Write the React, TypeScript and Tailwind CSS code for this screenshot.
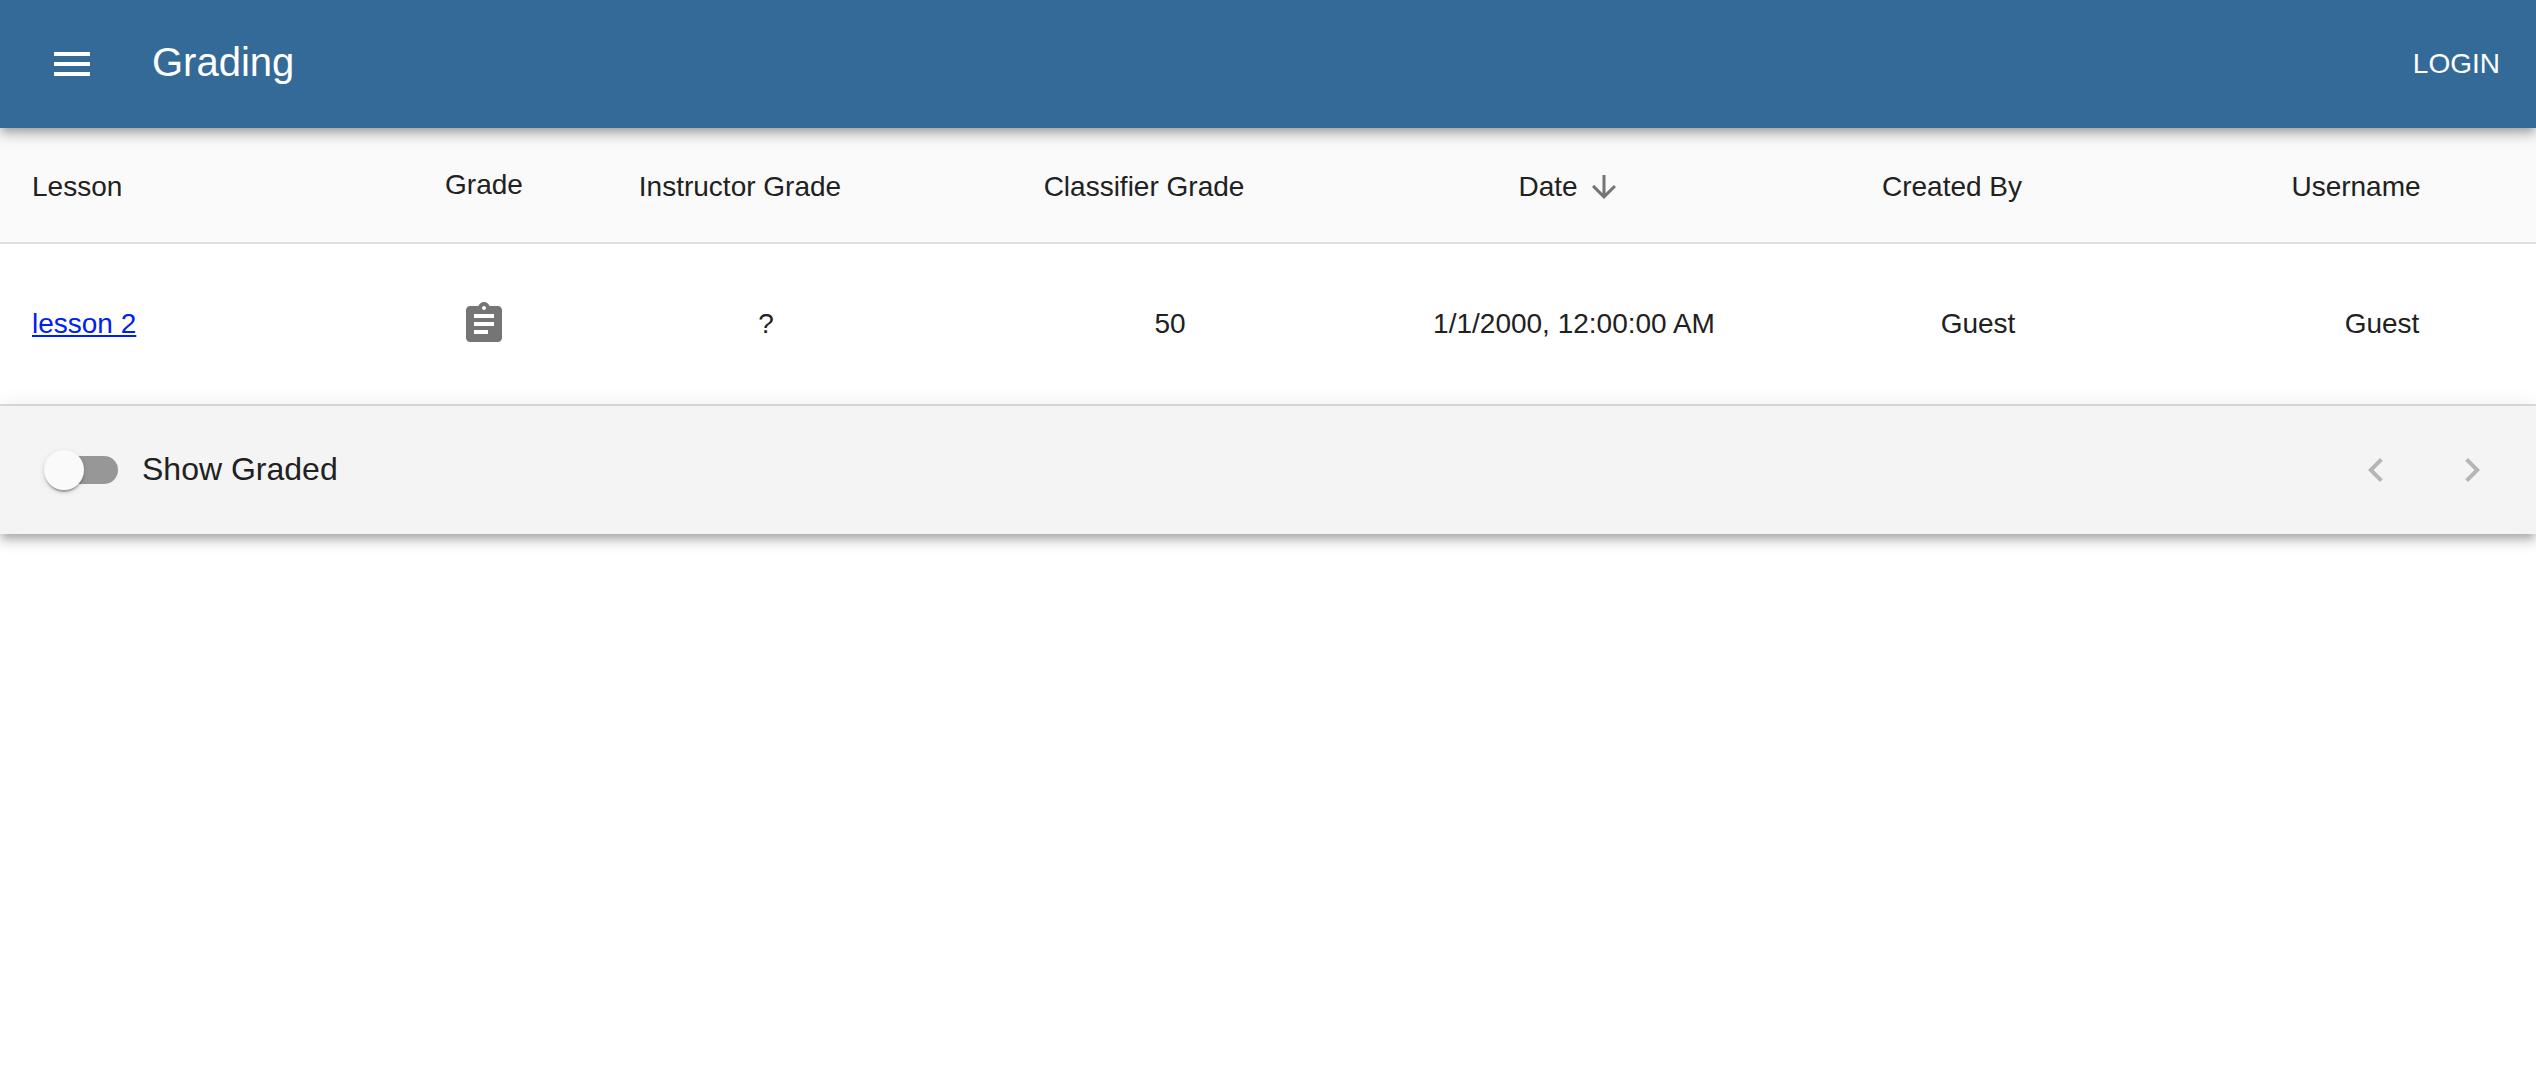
import { useState, type ReactNode } from "react";

const icons = {
  menu: "M3 18h18v-2H3v2zm0-5h18v-2H3v2zm0-7v2h18V6H3z",
  arrowDown: "M20 12l-1.41-1.41L13 16.17V4h-2v12.17l-5.58-5.59L4 12l8 8 8-8z",
  assignment:
    "M19 3h-4.18C14.4 1.84 13.3 1 12 1c-1.3 0-2.4.84-2.82 2H5c-1.1 0-2 .9-2 2v14c0 1.1.9 2 2 2h14c1.1 0 2-.9 2-2V5c0-1.1-.9-2-2-2zm-7 0c.55 0 1 .45 1 1s-.45 1-1 1-1-.45-1-1 .45-1 1-1zm2 14H7v-2h7v2zm3-4H7v-2h10v2zm0-4H7V7h10v2z",
  chevronLeft: "M15.41 7.41L14 6l-6 6 6 6 1.41-1.41L10.83 12z",
  chevronRight: "M10 6L8.59 7.41 13.17 12l-4.58 4.59L10 18l6-6z",
};

function Icon({ d, className }: { d: string; className: string }) {
  return (
    <svg viewBox="0 0 24 24" fill="currentColor" aria-hidden="true" className={className}>
      <path d={d} />
    </svg>
  );
}

type Column = { id: string; label: string; sortable: boolean; width: string };

const columns: Column[] = [
  { id: "lesson", label: "Lesson", sortable: true, width: "w-[404px]" },
  { id: "grade", label: "Grade", sortable: false, width: "w-[160px]" },
  { id: "instructor", label: "Instructor Grade", sortable: true, width: "w-[404px]" },
  { id: "classifier", label: "Classifier Grade", sortable: true, width: "w-[404px]" },
  { id: "date", label: "Date", sortable: true, width: "w-[404px]" },
  { id: "createdBy", label: "Created By", sortable: true, width: "w-[404px]" },
  { id: "username", label: "Username", sortable: true, width: "w-[404px]" },
];

const sessions = [
  {
    lesson: "lesson 2",
    instructor: "?",
    classifier: "50",
    date: "1/1/2000, 12:00:00 AM",
    createdBy: "Guest",
    username: "Guest",
  },
];

const elevation =
  "shadow-[0_4px_8px_-2px_rgba(0,0,0,0.2),0_8px_10px_0_rgba(0,0,0,0.14),0_2px_20px_0_rgba(0,0,0,0.12)]";

function Cell({ children, left = false }: { children: ReactNode; left?: boolean }) {
  return (
    <td className={left ? "border-b-2 border-[#e0e0e0] p-8 text-left" : "border-b-2 border-[#e0e0e0] p-8 text-center"}>
      {children}
    </td>
  );
}

export default function App() {
  const [sortBy, setSortBy] = useState("date");
  const [showGraded, setShowGraded] = useState(false);

  return (
    <div className="min-h-screen bg-white font-['Liberation_Sans',Arial,sans-serif] text-[28px] leading-10 text-[#212121]">
      <header className={`relative z-10 flex h-32 items-center bg-[#346a98] px-6 text-white ${elevation}`}>
        <button type="button" aria-label="menu" className="p-6">
          <Icon d={icons.menu} className="size-12" />
        </button>
        <h1 className="ml-8 flex-1 pb-1 text-[40px] leading-[60px]">Grading</h1>
        <button type="button" className="px-3 py-3 leading-12">
          LOGIN
        </button>
      </header>

      <main>
        <div className="overflow-x-auto [scrollbar-width:none]">
          <table className="w-full min-w-[2584px] table-fixed border-separate border-spacing-0">
            <thead>
              <tr>
                {columns.map((column) => (
                  <th
                    key={column.id}
                    scope="col"
                    className={`${column.width} ${
                      column.id === "lesson" ? "text-left" : "text-center"
                    } h-[116px] border-b-2 border-[#e0e0e0] bg-[#fafafa] px-8 font-normal whitespace-nowrap`}
                  >
                    {column.sortable ? (
                      <button
                        type="button"
                        onClick={() => setSortBy(column.id)}
                        className="inline-flex items-center pt-1 align-middle"
                      >
                        {column.label}
                        <Icon
                          d={icons.arrowDown}
                          className={`mx-2 size-9 text-[#757575] ${sortBy === column.id ? "" : "opacity-0"}`}
                        />
                      </button>
                    ) : (
                      column.label
                    )}
                  </th>
                ))}
              </tr>
            </thead>
            <tbody>
              {sessions.map((session) => (
                <tr key={session.lesson}>
                  <Cell left>
                    <a href="#lesson" className="text-[#0020ee] underline">
                      {session.lesson}
                    </a>
                  </Cell>
                  <Cell>
                    <button type="button" aria-label="grade" className="block p-6 text-[#757575]">
                      <Icon d={icons.assignment} className="size-12" />
                    </button>
                  </Cell>
                  <Cell>{session.instructor}</Cell>
                  <Cell>{session.classifier}</Cell>
                  <Cell>{session.date}</Cell>
                  <Cell>{session.createdBy}</Cell>
                  <Cell>{session.username}</Cell>
                </tr>
              ))}
            </tbody>
          </table>
        </div>

        <div className={`relative flex h-32 items-center justify-between bg-[#f4f4f4] pr-4 pl-[26px] ${elevation}`}>
          <label className="flex cursor-pointer items-center text-[32px] leading-12">
            <span className="relative flex h-[76px] w-[116px] items-center px-6">
              <input
                type="checkbox"
                checked={showGraded}
                onChange={(event) => setShowGraded(event.target.checked)}
                className="peer h-7 w-[68px] cursor-pointer appearance-none rounded-full bg-black/38 checked:bg-[#346a98]/50"
              />
              <span className="pointer-events-none absolute top-[18px] left-[18px] size-10 rounded-full bg-[#fafafa] shadow-[0_4px_2px_-2px_rgba(0,0,0,0.2),0_2px_2px_0_rgba(0,0,0,0.14),0_2px_6px_0_rgba(0,0,0,0.12)] peer-checked:left-[58px]" />
            </span>
            <span className="pb-0.5">Show Graded</span>
          </label>
          <div className="flex text-[#b5b5b5]">
            <button type="button" aria-label="previous page" disabled className="p-6">
              <Icon d={icons.chevronLeft} className="size-12" />
            </button>
            <button type="button" aria-label="next page" disabled className="p-6">
              <Icon d={icons.chevronRight} className="size-12" />
            </button>
          </div>
        </div>
      </main>
    </div>
  );
}
